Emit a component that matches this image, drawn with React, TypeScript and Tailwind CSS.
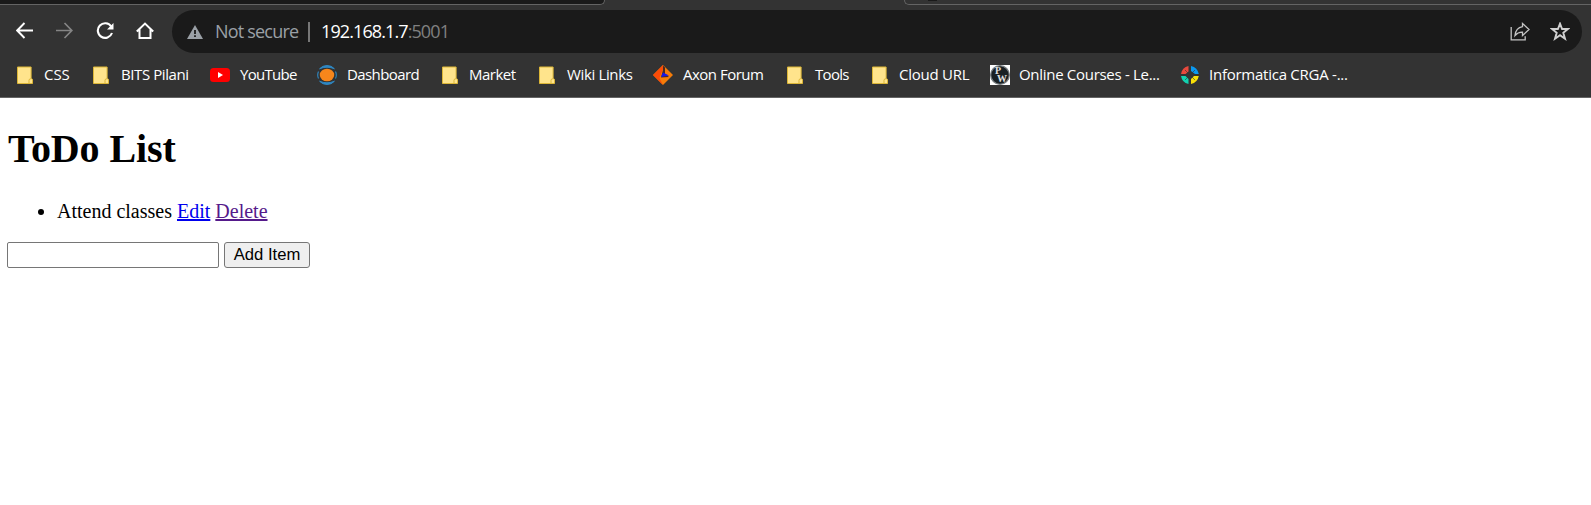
import type { ReactNode } from "react";

function Folder() {
  return (
    <svg width="16" height="19" viewBox="0 0 16 19" className="block">
      <path d="M.5 1h13.6v11.5l1.4.8v4.2h-15z" fill="#ffe48c" stroke="#dcb637" />
      <path d="M12 17.5v-3.2q0-1.6 2-1.6" fill="none" stroke="#dcb637" />
    </svg>
  );
}

function YouTube() {
  return (
    <svg width="20" height="20" viewBox="0 0 20 20" className="block">
      <rect y="3" width="20" height="14" rx="3.5" fill="#f00" />
      <path d="M8 7v6l5-3z" fill="#fff" />
    </svg>
  );
}

function Dashboard() {
  return (
    <svg width="20" height="20" viewBox="0 0 20 20" className="block">
      <ellipse cx="10" cy="10" rx="7.2" ry="6.3" fill="#f7861b" />
      <g fill="none" stroke="#2f87c1">
        <path d="M2.6 3.800Q5.500.5 10 .5t7.400 3.300Q14 2.200 10 2.200T2.600 3.800z" fill="#2f87c1" />
        <path d="M2.600 16.200Q5.500 19.500 10 19.500t7.400-3.300Q14 17.800 10 17.800t-7.400-1.600z" fill="#2f87c1" />
        <path d="M1.500 6.500q-1.600 3.500 0 7M18.500 6.500q1.600 3.500 0 7" strokeWidth="1.100" />
      </g>
    </svg>
  );
}

function Axon() {
  return (
    <svg width="20" height="20" viewBox="0 0 20 20" className="block">
      <path d="M10 0l10 10-10 10L0 10z" fill="#f57c08" />
      <path d="M10 0v4L6.500 13 10 20 0 10z" fill="#fb4b08" />
      <path d="M10 .5v4.500l-2 7.500 8-.5-4-3V2.500z" fill="#4b2a20" />
      <path d="M10 7.500l6 3-8 1.500z" fill="#1717e8" />
    </svg>
  );
}

function Courses() {
  return (
    <span className="relative block size-5 bg-white">
      <svg width="20" height="20" viewBox="0 0 20 20" className="block">
        <circle cx="10" cy="10" r="9.300" fill="#192024" stroke="#777d80" strokeWidth="1.300" />
      </svg>
      <span className="absolute left-[5px] top-[2px] h-2 font-['Liberation_Serif',serif] text-[10px] font-bold leading-[8px] text-[#e1e1e1]">P</span>
      <span className="absolute left-[7px] top-[10px] h-2 font-['Liberation_Serif',serif] text-[10px] font-bold leading-[8px] text-[#e1e1e1]">W</span>
    </span>
  );
}

function Informatica() {
  return (
    <svg width="20" height="20" viewBox="0 0 20 20" className="block">
      <path d="M8.500 1v5.500L5.500 9H1Q2 2.500 8.500 1z" fill="#e8493d" />
      <path d="M11 1q6.500 1.500 7.800 8H15l-4-3z" fill="#0a98ef" />
      <path d="M1 11h4.500l3 3v5Q2 17.500 1 11z" fill="#12d2b0" />
      <path d="M18.800 11q-1.300 6.500-7.800 8v-5l3-3z" fill="#f8df08" />
      <path d="M5 5l10 10M15 5L5 15" stroke="#333" strokeWidth=".6" />
    </svg>
  );
}

function Bookmark({ cell, text, icon, children }: { cell: string; text: string; icon: ReactNode; children: string }) {
  return (
    <a className={"flex h-5 shrink-0 items-center " + cell}>
      {icon}
      <span className={"whitespace-nowrap pb-[2px] " + text}>{children}</span>
    </a>
  );
}

function Toolbar() {
  return (
    <div className="flex h-[43px] items-center pl-4 pr-[9px]">
      <div className="flex w-[156px] shrink-0 items-center pb-0.5">
        <svg width="17" height="17" viewBox="0 0 17 17" fill="none" stroke="#fff" strokeWidth="1.900">
          <path d="M17 8.500H1.500M8.500 1L1.200 8.500l7.300 7.500" />
        </svg>
        <svg className="ml-[23px]" width="17" height="17" viewBox="0 0 17 17" fill="none" stroke="#858585" strokeWidth="1.700">
          <path d="M0 8.500h15.500M8.500 1l7.300 7.500L8.500 16" />
        </svg>
        <svg className="ml-[23px]" width="18" height="18" viewBox="0 0 18 18" fill="none" stroke="#fff" strokeWidth="2.100">
          <path d="M15.200 4.500A7.300 7.300 0 1 0 16 11" />
          <path d="M17.500 1v6.500H11z" fill="#fff" stroke="none" />
        </svg>
        <svg className="ml-[22px]" width="18" height="18" viewBox="0 0 18 18" fill="none" stroke="#fff" strokeWidth="2">
          <path d="M.8 9.500L9 1.600l8.200 7.900M3.500 7.500V16h11V7.500" />
        </svg>
      </div>
      <div className="flex h-[43px] flex-1 items-center rounded-full bg-[#1a1a1a] pl-[15px] pr-[12px] text-[18px]">
        <svg width="16" height="14" viewBox="0 0 16 14">
          <path d="M8 0l8 14H0z" fill="#9aa0a6" />
          <path d="M7.100 5h1.800v4H7.100zM7.100 10.300h1.800v1.800H7.100z" fill="#1a1a1a" />
        </svg>
        <span className="ml-3 w-[93px] whitespace-nowrap tracking-[-0.8px] text-[#9aa0a6]">Not secure</span>
        <span className="h-5 w-[2px] bg-[#777]" />
        <span className="ml-[11px] whitespace-nowrap tracking-[-0.9px] text-white">
          192.168.1.7<span className="text-[#808080]">:5001</span>
        </span>
        <svg className="ml-auto" width="20" height="19" viewBox="0 0 20 19" fill="none" stroke="#c4c4c4" strokeWidth="1.300">
          <path d="M1.200 5v12.800h14v-3.500" />
          <path d="M12.500 1.500l6.500 6-6.500 6v-3.300q-4.500-.2-7.500 3.300.8-7.700 7.500-8.800z" />
        </svg>
        <svg className="ml-5" width="20" height="19" viewBox="0 0 20 19" fill="none" stroke="#d0d0d0" strokeWidth="1.900">
          <path d="M10 1.700l2.100 5.300h5.700l-4.500 3.800 1.700 5.900-5-3.500-5 3.500 1.700-5.900L2.200 7h5.700z" />
        </svg>
      </div>
    </div>
  );
}

export default function App() {
  return (
    <div className="h-[505px] overflow-hidden bg-white">
      <header className="h-[98px] border-b border-[#646464] bg-[#333] font-['Open_Sans','Noto_Sans',sans-serif]">
        <div className="mb-[5px] flex h-[5px]">
          <div className="w-[605px] rounded-br-[6px] border-b border-r border-[#646464] bg-[#1a1a1a]" />
          <div className="ml-[299px] flex flex-1 justify-start rounded-bl-[6px] border-b border-l border-[#646464] pl-[23px]">
            <span className="h-px w-[9px] bg-[#1a1a1a]" />
          </div>
        </div>
        <Toolbar />
        <nav className="mt-3 flex h-5 pl-[17px] text-[15px] leading-5 text-white">
          <Bookmark cell="w-[76px]" text="ml-[11px] tracking-[-0.05px]" icon={<Folder />}>CSS</Bookmark>
          <Bookmark cell="w-[117px]" text="ml-[12px] tracking-[-0.42px]" icon={<Folder />}>BITS Pilani</Bookmark>
          <Bookmark cell="w-[107px]" text="ml-[10px] tracking-[-0.7px]" icon={<YouTube />}>YouTube</Bookmark>
          <Bookmark cell="w-[125px]" text="ml-[10px] tracking-[-0.6px]" icon={<Dashboard />}>Dashboard</Bookmark>
          <Bookmark cell="w-[97px]" text="ml-[11px] tracking-[-0.5px]" icon={<Folder />}>Market</Bookmark>
          <Bookmark cell="w-[114px]" text="ml-[12px] tracking-[-0.35px]" icon={<Folder />}>Wiki Links</Bookmark>
          <Bookmark cell="w-[134px]" text="ml-[10px] tracking-[-0.5px]" icon={<Axon />}>Axon Forum</Bookmark>
          <Bookmark cell="w-[85px]" text="ml-[12px] tracking-[-0.7px]" icon={<Folder />}>Tools</Bookmark>
          <Bookmark cell="w-[118px]" text="ml-[11px] tracking-[-0.25px]" icon={<Folder />}>Cloud URL</Bookmark>
          <Bookmark cell="w-[190px]" text="ml-[9px] tracking-[-0.3px]" icon={<Courses />}>Online Courses - Le...</Bookmark>
          <Bookmark cell="w-[170px]" text="ml-[9px] tracking-[-0.25px]" icon={<Informatica />}>Informatica CRGA -...</Bookmark>
        </nav>
      </header>
      <main className="px-[7px] font-['Liberation_Serif',serif] text-[20px] leading-[23px] text-black">
        <h1 className="pl-px pt-[28px] text-[40px] font-bold leading-[46px] tracking-[-0.1px]">ToDo List</h1>
        <ul className="mt-[28px] list-disc pl-[50px]">
          <li className="h-[23px]">
            Attend classes{" "}
            <a href="#edit" className="text-[#0000ee] underline">Edit</a>{" "}
            <a href="#delete" className="text-[#551a8b] underline">Delete</a>
          </li>
        </ul>
        <form className="mt-[19px] flex gap-[5px] font-['Liberation_Sans',sans-serif] text-[16.67px]">
          <input aria-label="Item" className="h-[26px] w-[212px] rounded-[2px] border border-[#767676] bg-white px-1" />
          <button type="button" className="h-[26px] w-[86px] rounded-[3px] border border-[#767676] bg-[#efefef] leading-6">Add Item</button>
        </form>
      </main>
    </div>
  );
}
